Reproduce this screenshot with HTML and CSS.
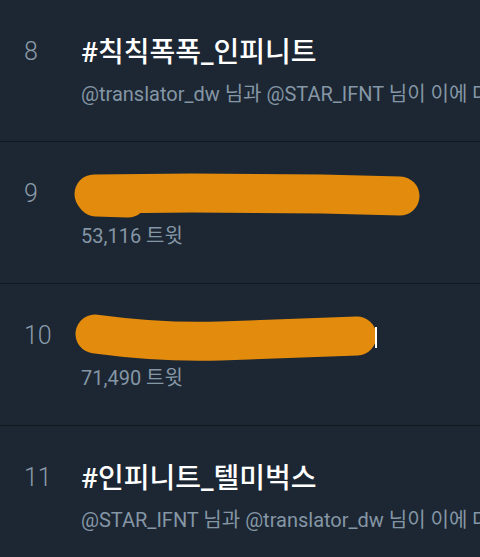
FILE: index.html
```html
<!DOCTYPE html>
<html>
  <head>
    <title>Trends</title>
    <link rel="stylesheet" href="styles.css">
  </head>
  <body>
    <div class="trends">
      <div class="trend">
        <div class="rank">8</div>
        <div class="body">
          <div class="title">#칙칙폭폭_인피니트</div>
          <div class="meta">@translator_dw 님과 @STAR_IFNT 님이 이에 대해 트윗했습니다</div>
        </div>
      </div>

      <div class="trend">
        <div class="rank">9</div>
        <div class="body">
          <div class="title hidden">
            <!-- redacted -->
            <svg class="scribble" width="360" height="56" viewBox="0 0 360 56">
              <path d="M22 26 L120 25 L250 26 L328 28" />
              <path d="M24 29 L56 30" />
            </svg>
          </div>
          <div class="meta">53,116 트윗</div>
        </div>
      </div>

      <div class="trend">
        <div class="rank">10</div>
        <div class="body">
          <div class="title hidden">
            <svg class="scribble" width="360" height="56" viewBox="0 0 360 56">
              <path d="M23 24 Q90 33 148 31 T 285 26" />
              <rect class="cursor" x="303" y="17" width="2" height="21" />
            </svg>
          </div>
          <div class="meta">71,490 트윗</div>
        </div>
      </div>

      <div class="trend">
        <div class="rank">11</div>
        <div class="body">
          <div class="title">#인피니트_텔미벅스</div>
          <div class="meta">@STAR_IFNT 님과 @translator_dw 님이 이에 대해 트윗했습니다</div>
        </div>
      </div>
    </div>
  </body>
</html>
```

FILE: styles.css
```css
body {
  margin: 0;
  background-color: #1c2733;
  font-family: Roboto, "Noto Sans CJK KR", sans-serif;
  overflow: hidden;
}

.trends {
  display: flex;
  flex-direction: column;
}

.trend {
  display: grid;
  grid-template-columns: 81px 1fr;
  height: 142px;
  box-sizing: border-box;
  padding-top: 37px;
  border-bottom: 1px solid #101820;
}

.rank {
  padding-left: 24px;
  font-size: 25px;
  font-weight: 300;
  line-height: 29px;
  color: #8b9aa8;
}

.body {
  min-width: 0;
}

.title {
  font-size: 28px;
  line-height: 32px;
  font-weight: 500;
  color: #ffffff;
  white-space: nowrap;
}

.title.hidden {
  position: relative;
  height: 32px;
}

.scribble {
  position: absolute;
  top: -11px;
  left: -9px;
}

.scribble path {
  fill: none;
  stroke: #e38b0c;
  stroke-width: 39;
  stroke-linecap: round;
  stroke-linejoin: round;
}

.cursor {
  fill: #ffffff;
}

.meta {
  margin-top: 13px;
  font-size: 20px;
  line-height: 24px;
  color: #8596a5;
  white-space: nowrap;
  overflow: hidden;
}
```
